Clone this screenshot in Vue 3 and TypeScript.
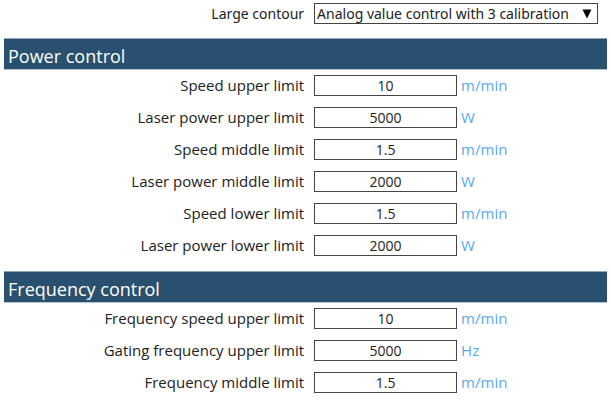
<script setup lang="ts">
import { ref } from 'vue'

interface Field {
  id: string
  label: string
  value: string
  unit: string
}

interface Section {
  title: string
  fields: Field[]
}

const contourMode = ref('analog3')

const sections = ref<Section[]>([
  {
    title: 'Power control',
    fields: [
      { id: 'speed-upper', label: 'Speed upper limit', value: '10', unit: 'm/min' },
      { id: 'power-upper', label: 'Laser power upper limit', value: '5000', unit: 'W' },
      { id: 'speed-middle', label: 'Speed middle limit', value: '1.5', unit: 'm/min' },
      { id: 'power-middle', label: 'Laser power middle limit', value: '2000', unit: 'W' },
      { id: 'speed-lower', label: 'Speed lower limit', value: '1.5', unit: 'm/min' },
      { id: 'power-lower', label: 'Laser power lower limit', value: '2000', unit: 'W' },
    ],
  },
  {
    title: 'Frequency control',
    fields: [
      { id: 'freq-speed-upper', label: 'Frequency speed upper limit', value: '10', unit: 'm/min' },
      { id: 'gating-upper', label: 'Gating frequency upper limit', value: '5000', unit: 'Hz' },
      { id: 'freq-middle', label: 'Frequency middle limit', value: '1.5', unit: 'm/min' },
    ],
  },
])
</script>

<template>
  <form class="settings" @submit.prevent>
    <div class="row mode">
      <label class="label" for="contour">Large contour</label>
      <div class="select-wrap">
        <select id="contour" v-model="contourMode" class="select">
          <option value="analog3">Analog value control with 3 calibration</option>
        </select>
        <svg class="arrow" viewBox="0 0 10 10" aria-hidden="true">
          <path d="M0.5 0.5H9.5L5 9.5Z" />
        </svg>
      </div>
    </div>

    <section v-for="section in sections" :key="section.title" class="section">
      <h2 class="title">{{ section.title }}</h2>
      <div class="rows">
        <div v-for="field in section.fields" :key="field.id" class="row">
          <label class="label" :for="field.id">{{ field.label }}</label>
          <div class="field">
            <input :id="field.id" v-model="field.value" class="input" type="text" inputmode="decimal" />
            <span class="unit">{{ field.unit }}</span>
          </div>
        </div>
      </div>
    </section>
  </form>
</template>

<style>
body {
  background: #ffffff;
}
</style>

<style scoped>
.settings {
  padding: 3px 4px 0;
  font-family: 'Open Sans', 'Noto Sans', sans-serif;
  font-size: 15px;
  line-height: 21px;
  color: #222222;
}

.row {
  display: grid;
  grid-template-columns: 18fr 17fr;
  align-items: center;
}

.mode {
  font-family: 'Noto Sans', 'Open Sans', sans-serif;
  font-size: 14px;
}

.label {
  padding-right: 10px;
  text-align: right;
  white-space: nowrap;
}

.select-wrap {
  display: grid;
  align-items: center;
  margin-right: 9px;
}

.select,
.arrow {
  grid-area: 1 / 1;
}

.select {
  box-sizing: border-box;
  width: 100%;
  min-width: 0;
  height: 21px;
  margin: 0;
  padding: 0 18px 0 2px;
  border: 1px solid #444444;
  border-radius: 0;
  background: #ffffff;
  color: inherit;
  font: inherit;
  line-height: 19px;
  appearance: none;
}

.arrow {
  justify-self: end;
  width: 10px;
  height: 10px;
  margin-right: 6px;
  fill: #000000;
  pointer-events: none;
}

.section {
  margin-top: 14px;
}

.section + .section {
  margin-top: 15px;
}

.title {
  margin: 0;
  padding: 5px 4px 0;
  border-top: 1px solid #8fa6b8;
  border-bottom: 1px solid #b4c4d2;
  background: #29516f;
  color: #ffffff;
  font-size: 18px;
  font-weight: 400;
  line-height: 25px;
}

.rows {
  display: grid;
  gap: 11px;
  padding-top: 5px;
}

.field {
  display: flex;
  align-items: center;
  gap: 4px;
}

.input {
  box-sizing: border-box;
  width: 143px;
  height: 21px;
  margin: 0;
  padding: 0;
  border: 1px solid #444444;
  border-radius: 0;
  background: #ffffff;
  color: inherit;
  font: inherit;
  font-size: 14px;
  text-align: center;
}

.unit {
  color: #5aaaea;
}
</style>
